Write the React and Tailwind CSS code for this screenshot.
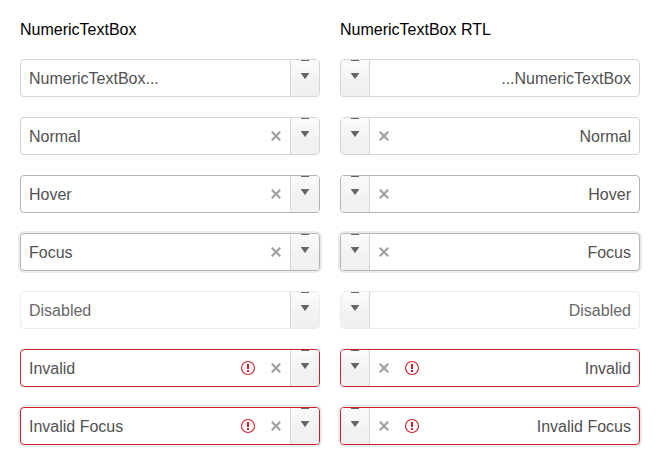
const rows = [
  { placeholder: true },
  { text: 'Normal', clear: true },
  { text: 'Hover', clear: true, state: 'hover' },
  { text: 'Focus', clear: true, state: 'focus' },
  { text: 'Disabled', state: 'disabled' },
  { text: 'Invalid', clear: true, state: 'invalid' },
  { text: 'Invalid Focus', clear: true, state: 'invalidFocus' },
];

const frames = {
  normal: 'border-[#d5d5d5]',
  hover: 'border-[#b4b4b4]',
  focus: 'border-[#b4b4b4] shadow-[0_0_0_2px_#ebebeb]',
  disabled: 'border-[#ececec]',
  invalid: 'border-[#ce2029]',
  invalidFocus: 'border-[#ce2029] shadow-[0_0_0_2px_#ebebeb]',
};

function ClearIcon() {
  return (
    <svg className="mx-[9px] size-[10px] shrink-0" viewBox="0 0 10 10" fill="none" stroke="#a3a3a3" strokeWidth="2.2">
      <path d="M.7 .7 9.3 9.3M9.3 .7.7 9.3" />
    </svg>
  );
}

function InvalidIcon() {
  return (
    <svg className="mx-[7px] size-[14px] shrink-0" viewBox="0 0 14 14" fill="none">
      <circle cx="7" cy="7" r="6.45" stroke="#ce2029" strokeWidth="1.1" />
      <path d="M6 3h2v5H6zM6 9h2v2H6z" fill="#ce2029" />
    </svg>
  );
}

function Spinner({ rtl }) {
  return (
    <div className={`flex w-[29px] shrink-0 flex-col overflow-hidden ${rtl ? 'rounded-l-[3px] border-r' : 'rounded-r-[3px] border-l'} border-[#d5d5d5]`}>
      <div className="flex h-[18px] flex-col items-center bg-linear-to-b from-[#fbfbfb] to-[#f4f4f4]">
        <div className="h-px w-2 bg-[#656565]" />
        <svg className="mt-3 h-[5px] w-2" viewBox="0 0 8 5" fill="#656565">
          <path d="M0 0h8v.6L4.8 5H3.2L0 .6z" />
        </svg>
      </div>
      <div className="flex h-[18px] justify-center bg-linear-to-b from-[#f2f2f2] to-[#f0f0f0]">
        <div className="h-px w-[2px] bg-[#b5b5b5]" />
      </div>
    </div>
  );
}

function NumericTextBox({ text, placeholder, clear, state = 'normal', rtl }) {
  const invalid = state === 'invalid' || state === 'invalidFocus';
  const label = placeholder ? (rtl ? '...NumericTextBox' : 'NumericTextBox...') : text;
  const color = state === 'disabled' ? 'text-[#696969]' : 'text-[#515151]';
  return (
    <div className={`flex h-[38px] w-[300px] rounded-[4px] border bg-white ${rtl ? 'flex-row-reverse' : ''} ${frames[state]}`}>
      <div className={`flex min-w-0 grow items-center px-2 pt-0.5 leading-6 ${rtl ? 'justify-end' : ''} ${color}`}>{label}</div>
      <div className={`flex items-center ${rtl ? 'flex-row-reverse' : ''}`}>
        {invalid && <InvalidIcon />}
        {clear && <ClearIcon />}
      </div>
      <Spinner rtl={rtl} />
    </div>
  );
}

function Column({ title, rtl }) {
  return (
    <section className="flex w-[300px] flex-col gap-5">
      <h2 className="h-[19px] leading-[19px] text-black">{title}</h2>
      {rows.map((row, i) => (
        <NumericTextBox key={i} {...row} rtl={rtl} />
      ))}
    </section>
  );
}

export default function App() {
  return (
    <main className="flex h-[465px] w-[660px] gap-5 overflow-hidden bg-white px-5 pt-5 font-['Liberation_Sans',Arial,sans-serif] text-base">
      <Column title="NumericTextBox" />
      <Column title="NumericTextBox RTL" rtl />
    </main>
  );
}
